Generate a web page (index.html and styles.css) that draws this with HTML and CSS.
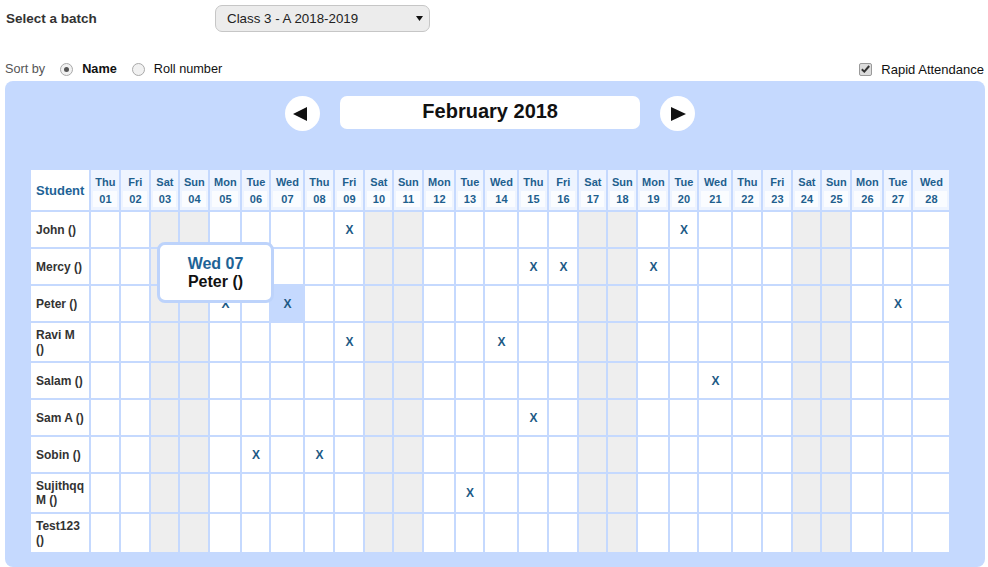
FILE: index.html
```html
<!DOCTYPE html>
<html>
<head>
<meta charset="utf-8">
<title>Attendance</title>
<link rel="stylesheet" href="styles.css">
</head>
<body>
<div class="topbar">
  <div class="lbl">Select a batch</div>
  <div class="select"><span>Class 3 - A 2018-2019</span><svg width="7" height="5" viewBox="0 0 7 5"><path d="M0 0H7L3.5 5Z" fill="#111"/></svg></div>
</div>
<div class="sortbar">
  <span class="sort-l">Sort by</span>
  <span class="radio on"></span><span class="name">Name</span>
  <span class="radio"></span><span class="roll">Roll number</span>
  <span class="spacer"></span>
  <span class="check"><svg width="9" height="8" viewBox="0 0 9 8"><path d="M0.8 4.2L3.3 6.6L8.2 1" fill="none" stroke="#333" stroke-width="2"/></svg></span><span class="rapid">Rapid Attendance</span>
</div>
<div class="panel">
  <div class="cal">
    <div class="nav">
      <div class="circ prev"><svg width="14" height="14" viewBox="0 0 14 14"><path d="M0 7L14 0V14Z" fill="#111"/></svg></div>
      <div class="month">February 2018</div>
      <div class="circ next"><svg width="15" height="14" viewBox="0 0 15 14"><path d="M15 7L0 0V14Z" fill="#111"/></svg></div>
    </div>
    <table class="grid">
      <thead>
        <tr>
          <th class="stu">Student</th>
          <th class="d thu"><div class="dw">Thu</div><div class="dn">01</div></th>
          <th class="d fri"><div class="dw">Fri</div><div class="dn">02</div></th>
          <th class="d sat"><div class="dw">Sat</div><div class="dn">03</div></th>
          <th class="d sun"><div class="dw">Sun</div><div class="dn">04</div></th>
          <th class="d mon"><div class="dw">Mon</div><div class="dn">05</div></th>
          <th class="d tue"><div class="dw">Tue</div><div class="dn">06</div></th>
          <th class="d wed"><div class="dw">Wed</div><div class="dn">07</div></th>
          <th class="d thu"><div class="dw">Thu</div><div class="dn">08</div></th>
          <th class="d fri"><div class="dw">Fri</div><div class="dn">09</div></th>
          <th class="d sat"><div class="dw">Sat</div><div class="dn">10</div></th>
          <th class="d sun"><div class="dw">Sun</div><div class="dn">11</div></th>
          <th class="d mon"><div class="dw">Mon</div><div class="dn">12</div></th>
          <th class="d tue"><div class="dw">Tue</div><div class="dn">13</div></th>
          <th class="d wed"><div class="dw">Wed</div><div class="dn">14</div></th>
          <th class="d thu"><div class="dw">Thu</div><div class="dn">15</div></th>
          <th class="d fri"><div class="dw">Fri</div><div class="dn">16</div></th>
          <th class="d sat"><div class="dw">Sat</div><div class="dn">17</div></th>
          <th class="d sun"><div class="dw">Sun</div><div class="dn">18</div></th>
          <th class="d mon"><div class="dw">Mon</div><div class="dn">19</div></th>
          <th class="d tue"><div class="dw">Tue</div><div class="dn">20</div></th>
          <th class="d wed"><div class="dw">Wed</div><div class="dn">21</div></th>
          <th class="d thu"><div class="dw">Thu</div><div class="dn">22</div></th>
          <th class="d fri"><div class="dw">Fri</div><div class="dn">23</div></th>
          <th class="d sat"><div class="dw">Sat</div><div class="dn">24</div></th>
          <th class="d sun"><div class="dw">Sun</div><div class="dn">25</div></th>
          <th class="d mon"><div class="dw">Mon</div><div class="dn">26</div></th>
          <th class="d tue"><div class="dw">Tue</div><div class="dn">27</div></th>
          <th class="d wed last"><div class="dw">Wed</div><div class="dn">28</div></th>
        </tr>
      </thead>
      <tbody>
        <tr>
          <td class="n">John ()</td>
          <td></td><td></td><td class="we"></td><td class="we"></td><td></td><td></td><td></td>
          <td></td><td>X</td><td class="we"></td><td class="we"></td><td></td><td></td><td></td>
          <td></td><td></td><td class="we"></td><td class="we"></td><td></td><td>X</td><td></td>
          <td></td><td></td><td class="we"></td><td class="we"></td><td></td><td></td><td></td>
        </tr>
        <tr>
          <td class="n">Mercy ()</td>
          <td></td><td></td><td class="we"></td><td class="we"></td><td></td><td></td><td></td>
          <td></td><td></td><td class="we"></td><td class="we"></td><td></td><td></td><td></td>
          <td>X</td><td>X</td><td class="we"></td><td class="we"></td><td>X</td><td></td><td></td>
          <td></td><td></td><td class="we"></td><td class="we"></td><td></td><td></td><td></td>
        </tr>
        <tr>
          <td class="n">Peter ()</td>
          <td></td><td></td><td class="we"></td><td class="we"></td><td>X</td><td></td><td class="hl">X</td>
          <td></td><td></td><td class="we"></td><td class="we"></td><td></td><td></td><td></td>
          <td></td><td></td><td class="we"></td><td class="we"></td><td></td><td></td><td></td>
          <td></td><td></td><td class="we"></td><td class="we"></td><td></td><td>X</td><td></td>
        </tr>
        <tr>
          <td class="n">Ravi M ()</td>
          <td></td><td></td><td class="we"></td><td class="we"></td><td></td><td></td><td></td>
          <td></td><td>X</td><td class="we"></td><td class="we"></td><td></td><td></td><td>X</td>
          <td></td><td></td><td class="we"></td><td class="we"></td><td></td><td></td><td></td>
          <td></td><td></td><td class="we"></td><td class="we"></td><td></td><td></td><td></td>
        </tr>
        <tr>
          <td class="n">Salam ()</td>
          <td></td><td></td><td class="we"></td><td class="we"></td><td></td><td></td><td></td>
          <td></td><td></td><td class="we"></td><td class="we"></td><td></td><td></td><td></td>
          <td></td><td></td><td class="we"></td><td class="we"></td><td></td><td></td><td>X</td>
          <td></td><td></td><td class="we"></td><td class="we"></td><td></td><td></td><td></td>
        </tr>
        <tr>
          <td class="n">Sam A ()</td>
          <td></td><td></td><td class="we"></td><td class="we"></td><td></td><td></td><td></td>
          <td></td><td></td><td class="we"></td><td class="we"></td><td></td><td></td><td></td>
          <td>X</td><td></td><td class="we"></td><td class="we"></td><td></td><td></td><td></td>
          <td></td><td></td><td class="we"></td><td class="we"></td><td></td><td></td><td></td>
        </tr>
        <tr>
          <td class="n">Sobin ()</td>
          <td></td><td></td><td class="we"></td><td class="we"></td><td></td><td>X</td><td></td>
          <td>X</td><td></td><td class="we"></td><td class="we"></td><td></td><td></td><td></td>
          <td></td><td></td><td class="we"></td><td class="we"></td><td></td><td></td><td></td>
          <td></td><td></td><td class="we"></td><td class="we"></td><td></td><td></td><td></td>
        </tr>
        <tr>
          <td class="n">Sujithqq M ()</td>
          <td></td><td></td><td class="we"></td><td class="we"></td><td></td><td></td><td></td>
          <td></td><td></td><td class="we"></td><td class="we"></td><td></td><td>X</td><td></td>
          <td></td><td></td><td class="we"></td><td class="we"></td><td></td><td></td><td></td>
          <td></td><td></td><td class="we"></td><td class="we"></td><td></td><td></td><td></td>
        </tr>
        <tr>
          <td class="n">Test123 ()</td>
          <td></td><td></td><td class="we"></td><td class="we"></td><td></td><td></td><td></td>
          <td></td><td></td><td class="we"></td><td class="we"></td><td></td><td></td><td></td>
          <td></td><td></td><td class="we"></td><td class="we"></td><td></td><td></td><td></td>
          <td></td><td></td><td class="we"></td><td class="we"></td><td></td><td></td><td></td>
        </tr>
      </tbody>
    </table>
    <div class="tip"><div class="tip-d">Wed 07</div><div class="tip-p">Peter ()</div></div>
  </div>
</div>
</body>
</html>
```
FILE: styles.css
```css
body {
  margin: 0;
  font-family: "Liberation Sans", Arial, sans-serif;
  color: #333;
  background: #fff;
}

.topbar {
  display: flex;
  align-items: center;
  padding: 5px 0 0 6px;
}
.topbar .lbl {
  width: 209px;
  font-size: 13.5px;
  font-weight: bold;
  color: #333;
}
.select {
  width: 215px;
  height: 27px;
  box-sizing: border-box;
  border: 1px solid #c6c6c6;
  border-radius: 7px;
  background: #ececec;
  display: flex;
  align-items: center;
  justify-content: space-between;
  padding: 0 6px 0 11px;
  font-size: 13.333px;
  color: #222;
}

.sortbar {
  display: flex;
  align-items: center;
  height: 14px;
  margin: 30px 4px 5px 5px;
  font-size: 12.7px;
  color: #111;
}
.sort-l { color: #555; }
.radio {
  width: 13px;
  height: 13px;
  box-sizing: border-box;
  border: 1px solid #a9a9a9;
  border-radius: 50%;
  background: #f1f1f1;
  margin: 0 9px 0 15px;
  display: flex;
  align-items: center;
  justify-content: center;
}
.radio.on::after {
  content: "";
  width: 5px;
  height: 5px;
  border-radius: 50%;
  background: #555;
}
.name { font-weight: bold; }
.spacer { flex: 1; }
.check {
  width: 13px;
  height: 13px;
  box-sizing: border-box;
  border: 1px solid #9a9a9a;
  border-radius: 2px;
  background: #dcdcdc;
  display: flex;
  align-items: center;
  justify-content: center;
  margin-right: 9px;
}
.rapid { font-size: 13px; }

.panel {
  display: flex;
  margin: 0 3px 0 5px;
  background: #c5d9fe;
  border-radius: 8px;
  padding: 15px 0 13px 24px;
}
.cal {
  position: relative;
}
.nav {
  display: flex;
  justify-content: center;
  align-items: flex-start;
  gap: 20px;
  margin-bottom: 37px;
}
.circ {
  width: 35px;
  height: 35px;
  border-radius: 50%;
  background: #fff;
  display: flex;
  align-items: center;
  justify-content: center;
}
.circ.prev svg { margin-right: 5px; }
.circ.next svg { margin-left: 1px; }
.month {
  width: 300px;
  height: 33px;
  box-sizing: border-box;
  padding-bottom: 2px;
  background: #fff;
  border-radius: 7px;
  display: flex;
  align-items: center;
  justify-content: center;
  font-size: 20px;
  font-weight: bold;
  color: #111;
}

.grid {
  border-collapse: separate;
  border-spacing: 2px;
}
.grid th, .grid td {
  padding: 0;
}
.grid th.stu {
  background: #fff;
  width: 48px;
  height: 40px;
  padding: 0 5px;
  font-size: 13px;
  font-weight: bold;
  color: #1e6396;
  text-align: center;
}
.grid th.d {
  background: #eef4ff;
  height: 40px;
  vertical-align: top;
  font-size: 11px;
  font-weight: bold;
  color: #1e5f8e;
  text-align: center;
}
.dw {
  margin: 3px 2px 0;
  height: 18px;
  line-height: 18px;
}
.dn {
  margin: 0 2px 3px;
  height: 16px;
  line-height: 16px;
  background: #fafcff;
}
.thu { width: 28px; }
.fri { width: 28px; }
.sat { width: 27px; }
.sun { width: 28px; }
.mon { width: 30px; }
.tue { width: 27px; }
.wed { width: 32px; }
.wed.last { width: 36px; }

.grid td {
  background: #fff;
  text-align: center;
  vertical-align: middle;
  font-size: 12px;
  font-weight: bold;
  color: #1d5a86;
}
.grid td.n {
  width: 48px;
  height: 25px;
  padding: 5px;
  line-height: 14px;
  text-align: left;
  color: #333;
}
.grid td.we { background: #eeeeee; }
.grid td.hl { background: #c5d9fe; }

.tip {
  position: absolute;
  left: 128px;
  top: 146px;
  width: 111px;
  height: 55px;
  border: 3px solid #bdd3fb;
  border-radius: 8px;
  background: #fff;
  display: flex;
  flex-direction: column;
  align-items: center;
  justify-content: center;
  font-size: 16px;
  font-weight: bold;
  line-height: 18px;
}
.tip-d { color: #1e6396; }
.tip-p { color: #111; }
```
